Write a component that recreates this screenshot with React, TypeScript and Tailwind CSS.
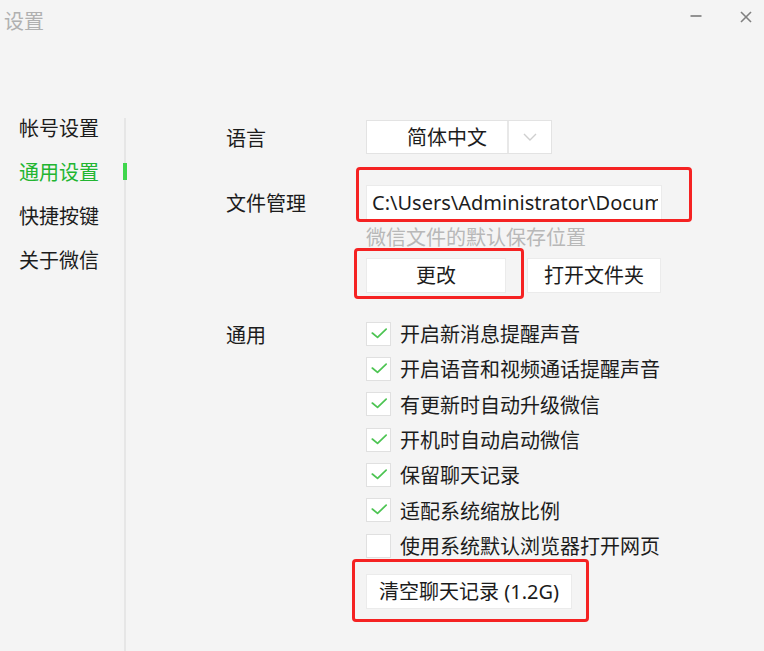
import React from 'react';

const navItems = ['帐号设置', '通用设置', '快捷按键', '关于微信'];

const options = [
    { label: '开启新消息提醒声音', checked: true },
    { label: '开启语音和视频通话提醒声音', checked: true },
    { label: '有更新时自动升级微信', checked: true },
    { label: '开机时自动启动微信', checked: true },
    { label: '保留聊天记录', checked: true },
    { label: '适配系统缩放比例', checked: true },
    { label: '使用系统默认浏览器打开网页', checked: false },
];

const Checkbox: React.FC<{ checked: boolean }> = ({ checked }) => (
    <div className="w-[25px] h-[24px] bg-white border border-[#e0e0e0] flex items-center justify-center shrink-0">
        {checked && (
            <svg width="24" height="24" viewBox="0 0 24 24" fill="none">
                <polyline points="5.5,11 11,15.5 20,7" stroke="#4cc452" strokeWidth="1.8" strokeLinecap="round" strokeLinejoin="round" />
            </svg>
        )}
    </div>
);

const Annotation: React.FC<{ className: string }> = ({ className }) => (
    <div className={`absolute border-[3px] border-[#f52222] rounded-[4px] pointer-events-none ${className}`} />
);

const App: React.FC = () => {
    return (
        <div
            className="w-[764px] h-[651px] bg-[#f4f4f4] overflow-hidden flex flex-col text-[#1c1c1c]"
            style={{ fontFamily: '"Noto Sans", "Noto Sans CJK SC", sans-serif' }}
        >
            {/* title bar */}
            <div className="flex justify-between items-start h-[106px] shrink-0">
                <div className="pl-[4px] pt-[10px] text-[20px] leading-[24px] text-[#b0b0b0]">设置</div>
                <div className="flex items-start pt-[11px] pr-[12px] gap-[38px]">
                    <svg width="12" height="12" viewBox="0 0 12 12" className="mt-[-1px]">
                        <line x1="0.5" y1="6" x2="11.5" y2="6" stroke="#7a7a7a" strokeWidth="1.6" />
                    </svg>
                    <svg width="12" height="12" viewBox="0 0 12 12">
                        <line x1="1" y1="1" x2="11" y2="11" stroke="#808080" strokeWidth="1.6" />
                        <line x1="11" y1="1" x2="1" y2="11" stroke="#808080" strokeWidth="1.6" />
                    </svg>
                </div>
            </div>

            <div className="flex flex-1">
                {/* sidebar */}
                <div className="w-[124px] pl-[19px] flex flex-col text-[20px]">
                    {navItems.map((item, i) => (
                        <div
                            key={item}
                            className={`h-[44px] flex items-center pt-[2px] ${i === 1 ? 'text-[#22b531]' : 'text-[#1c1c1c]'}`}
                        >
                            {item}
                        </div>
                    ))}
                </div>
                <div className="relative w-[2px] mt-[12px] bg-[#e6e6e6]">
                    <div className="absolute left-[-1px] top-[45px] w-[4px] h-[17px] bg-[#3fd64c]" />
                </div>

                {/* main */}
                <div className="flex-1 pl-[100px] pt-[14px] text-[20px]">
                    {/* language */}
                    <div className="flex items-center h-[34px]">
                        <div className="w-[140px] pt-[3px]">语言</div>
                        <div className="flex h-[34px] bg-white border border-[#e3e3e3] w-[186px]">
                            <div className="flex-1 flex items-center justify-center pl-[20px] pt-[1px] border-r-2 border-[#e8e8e8]">
                                简体中文
                            </div>
                            <div className="w-[42px] flex items-center justify-center">
                                <svg width="14" height="8" viewBox="0 0 14 8" fill="none">
                                    <polyline points="1,1 7,7 13,1" stroke="#cfcfcf" strokeWidth="1.4" />
                                </svg>
                            </div>
                        </div>
                    </div>

                    {/* file management */}
                    <div className="flex mt-[31px]">
                        <div className="w-[140px] h-[35px] flex items-center pt-[3px]">文件管理</div>
                        <div className="flex flex-col">
                            <div className="relative w-[296px] h-[35px] bg-white border border-[#ebebeb] flex items-center pl-[5px] pt-[1px]">
                                <div className="w-[286px] overflow-hidden whitespace-nowrap">C:\Users\Administrator\Docum</div>
                                <Annotation className="left-[-11px] right-[-31px] top-[-19px] bottom-[-3px]" />
                            </div>
                            <div className="mt-[7px] leading-[20px] pt-[1px] text-[#b8b8b8]">微信文件的默认保存位置</div>
                            <div className="flex gap-[21px] mt-[10px]">
                                <div className="relative w-[140px] h-[35px] bg-white border border-[#ebebeb] flex items-center justify-center pt-[1px]">
                                    更改
                                    <Annotation className="left-[-13px] right-[-19px] top-[-11px] bottom-[-7px]" />
                                </div>
                                <div className="w-[134px] h-[35px] bg-white border border-[#ebebeb] flex items-center justify-center pt-[1px]">
                                    打开文件夹
                                </div>
                            </div>
                        </div>
                    </div>

                    {/* general */}
                    <div className="flex mt-[23px]">
                        <div className="w-[140px] h-[35.33px] flex items-center pt-[5px]">通用</div>
                        <div className="flex flex-col">
                            {options.map((o) => (
                                <div key={o.label} className="h-[35.33px] flex items-center gap-[9px]">
                                    <Checkbox checked={o.checked} />
                                    <span className="pt-[3px]">{o.label}</span>
                                </div>
                            ))}
                            <div className="relative mt-[11px] w-[206px] h-[35px] bg-white border border-[#ebebeb] flex items-center justify-center pt-[1px]">
                                清空聊天记录 (1.2G)
                                <Annotation className="left-[-15px] right-[-18px] top-[-16px] bottom-[-14px]" />
                            </div>
                        </div>
                    </div>
                </div>
            </div>
        </div>
    );
};

export default App;
